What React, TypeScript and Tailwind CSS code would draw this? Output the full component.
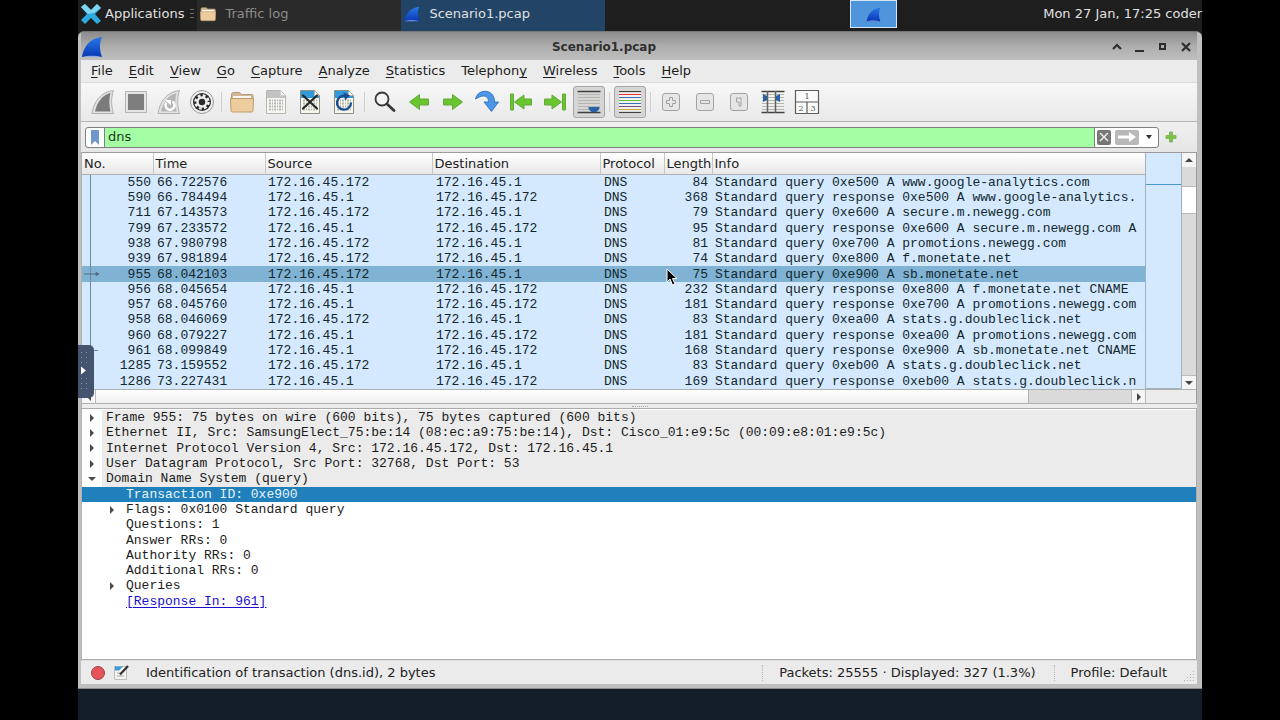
import { useState } from 'react';
import type { ReactNode } from 'react';

type Packet = {
  no: number;
  time: string;
  source: string;
  destination: string;
  length: number;
  info: string;
};

const CLIENT = '172.16.45.172';
const SERVER = '172.16.45.1';

const packets: Packet[] = [
  { no: 550, time: '66.722576', source: CLIENT, destination: SERVER, length: 84, info: 'Standard query 0xe500 A www.google-analytics.com' },
  { no: 590, time: '66.784494', source: SERVER, destination: CLIENT, length: 368, info: 'Standard query response 0xe500 A www.google-analytics.' },
  { no: 711, time: '67.143573', source: CLIENT, destination: SERVER, length: 79, info: 'Standard query 0xe600 A secure.m.newegg.com' },
  { no: 799, time: '67.233572', source: SERVER, destination: CLIENT, length: 95, info: 'Standard query response 0xe600 A secure.m.newegg.com A' },
  { no: 938, time: '67.980798', source: CLIENT, destination: SERVER, length: 81, info: 'Standard query 0xe700 A promotions.newegg.com' },
  { no: 939, time: '67.981894', source: CLIENT, destination: SERVER, length: 74, info: 'Standard query 0xe800 A f.monetate.net' },
  { no: 955, time: '68.042103', source: CLIENT, destination: SERVER, length: 75, info: 'Standard query 0xe900 A sb.monetate.net' },
  { no: 956, time: '68.045654', source: SERVER, destination: CLIENT, length: 232, info: 'Standard query response 0xe800 A f.monetate.net CNAME' },
  { no: 957, time: '68.045760', source: SERVER, destination: CLIENT, length: 181, info: 'Standard query response 0xe700 A promotions.newegg.com' },
  { no: 958, time: '68.046069', source: CLIENT, destination: SERVER, length: 83, info: 'Standard query 0xea00 A stats.g.doubleclick.net' },
  { no: 960, time: '68.079227', source: SERVER, destination: CLIENT, length: 181, info: 'Standard query response 0xea00 A promotions.newegg.com' },
  { no: 961, time: '68.099849', source: SERVER, destination: CLIENT, length: 168, info: 'Standard query response 0xe900 A sb.monetate.net CNAME' },
  { no: 1285, time: '73.159552', source: CLIENT, destination: SERVER, length: 83, info: 'Standard query 0xeb00 A stats.g.doubleclick.net' },
  { no: 1286, time: '73.227431', source: SERVER, destination: CLIENT, length: 169, info: 'Standard query response 0xeb00 A stats.g.doubleclick.n' },
];

const columns = ['No.', 'Time', 'Source', 'Destination', 'Protocol', 'Length', 'Info'];

// [before, underlined letter, after]
const menus = [
  ['', 'F', 'ile'],
  ['', 'E', 'dit'],
  ['', 'V', 'iew'],
  ['', 'G', 'o'],
  ['', 'C', 'apture'],
  ['', 'A', 'nalyze'],
  ['', 'S', 'tatistics'],
  ['Telephon', 'y', ''],
  ['', 'W', 'ireless'],
  ['', 'T', 'ools'],
  ['', 'H', 'elp'],
];

type Detail = { text: string; depth: 0 | 1; state?: 'open' | 'closed'; link?: boolean };

const details: Detail[] = [
  { text: 'Frame 955: 75 bytes on wire (600 bits), 75 bytes captured (600 bits)', depth: 0, state: 'closed' },
  { text: 'Ethernet II, Src: SamsungElect_75:be:14 (08:ec:a9:75:be:14), Dst: Cisco_01:e9:5c (00:09:e8:01:e9:5c)', depth: 0, state: 'closed' },
  { text: 'Internet Protocol Version 4, Src: 172.16.45.172, Dst: 172.16.45.1', depth: 0, state: 'closed' },
  { text: 'User Datagram Protocol, Src Port: 32768, Dst Port: 53', depth: 0, state: 'closed' },
  { text: 'Domain Name System (query)', depth: 0, state: 'open' },
  { text: 'Transaction ID: 0xe900', depth: 1 },
  { text: 'Flags: 0x0100 Standard query', depth: 1, state: 'closed' },
  { text: 'Questions: 1', depth: 1 },
  { text: 'Answer RRs: 0', depth: 1 },
  { text: 'Authority RRs: 0', depth: 1 },
  { text: 'Additional RRs: 0', depth: 1 },
  { text: 'Queries', depth: 1, state: 'closed' },
  { text: '[Response In: 961]', depth: 1, link: true },
];

function Fin({ className }: { className: string }) {
  return (
    <svg viewBox="0 0 24 24" className={className}>
      <defs>
        <linearGradient id="fin" x1="0" y1="0" x2="0" y2="1">
          <stop offset="0" stopColor="#2a78e8" />
          <stop offset="1" stopColor="#0838b4" />
        </linearGradient>
      </defs>
      <path d="M1 23C3 11 10 2 23 1c-3 6-3 14 0 22z" fill="url(#fin)" />
      <path d="M1 23c6-2 15-2 22 0z" fill="#8fa9dc" />
    </svg>
  );
}

function GrayFin({ children, light }: { children?: ReactNode; light?: boolean }) {
  return (
    <svg viewBox="0 0 24 24" className="size-6">
      <path d="M1 23.500C3 11 10 2 22.500.5c-2.500 7-2.500 15 0 23z" fill="#e2e2e2" stroke="#b0b0b0" />
      <path d="M4 21.500C6 12.500 11 5 19.500 3c-1.500 6-1.500 12.500 0 18.500z" fill={light ? '#b5b5b5' : '#7b7b7b'} />
      {children}
    </svg>
  );
}

function Folder({ className }: { className: string }) {
  return (
    <svg viewBox="0 0 24 24" className={className}>
      <path d="M1.500 4.500q0-2 2-2h6l2 2h10q1.500 0 1.500 1.500v6h-21.500z" fill="#d2b795" stroke="#b49a77" />
      <path d="M3 6h18v5H3z" fill="#faf7f2" />
      <path d="M.5 8.500h23l-.5 12q0 1.500-1.500 1.500h-19Q1 22 1 20.500z" fill="#edcd9d" stroke="#bd9c6c" />
    </svg>
  );
}

function Sheet({ gray, children }: { gray?: boolean; children?: ReactNode }) {
  return (
    <svg viewBox="0 0 24 24" className="size-6">
      <path d="M2.500.5h14l5 5v18h-19z" fill="#f7f7ef" stroke={gray ? '#b5b5b5' : '#8f8f83'} />
      <path d="M3 1h13v5h5v2H3z" fill={gray ? '#c2c2c2' : '#2f9ad9'} />
      <path d="M16.500.5v5h5z" fill="#fff" stroke={gray ? '#b5b5b5' : '#8f8f83'} strokeWidth=".6" />
      <path
        d="M5 10.500h14M5 13.500h14M5 16.500h14M5 19.500h14"
        stroke={gray ? '#b5b5b5' : '#b3b8a6'}
        strokeWidth="2"
        strokeDasharray="2 1 1 1"
      />
      {children}
    </svg>
  );
}

function GreenArrow({ back, stop }: { back?: boolean; stop?: boolean }) {
  return (
    <svg viewBox="0 0 24 24" className="size-6">
      <g transform={back ? 'matrix(-1 0 0 1 24 0)' : undefined} fill="#68c52e" stroke="#62a83c">
        {stop ? (
          <>
            <path d="M1.500 9H9V5l9.500 7L9 19v-4H1.500z" />
            <path d="M19.500 4h3v16h-3z" />
          </>
        ) : (
          <path d="M2.500 9h9V4.500l10 7.500-10 7.500V15h-9z" />
        )}
      </g>
    </svg>
  );
}

function ZoomBox({ children }: { children: ReactNode }) {
  return (
    <svg viewBox="0 0 24 24" className="size-6" fill="none" stroke="#a2a2a2">
      <rect x="3.500" y="3.500" width="17" height="17" rx="2.500" fill="#e6e6e6" />
      {children}
    </svg>
  );
}

const captureTools = [
  { label: 'Start capture', icon: <GrayFin /> },
  {
    label: 'Stop capture',
    icon: (
      <svg viewBox="0 0 24 24" className="size-6">
        <rect x="1.500" y="1.500" width="21" height="21" fill="#e4e4e4" stroke="#b5b5b5" />
        <rect x="4" y="4" width="16" height="16" fill="#7d7d7d" />
      </svg>
    ),
  },
  {
    label: 'Restart capture',
    icon: (
      <GrayFin light>
        <path d="M9.500 12.500a4.500 4.500 0 1 0 6-1" fill="none" stroke="#fff" strokeWidth="2.500" />
        <path d="M8 10h6v5.500z" fill="#fff" />
      </GrayFin>
    ),
  },
  {
    label: 'Capture options',
    icon: (
      <svg viewBox="0 0 24 24" className="size-6" fill="none">
        <circle cx="12" cy="12" r="11.500" fill="#eee" stroke="#999" />
        <circle cx="12" cy="12" r="9" fill="#2b2b2b" />
        <circle cx="12" cy="12" r="6.500" stroke="#eee" strokeWidth="2.500" strokeDasharray="2.800 2.300" />
        <circle cx="12" cy="12" r="4.500" stroke="#eee" strokeWidth="2.500" />
      </svg>
    ),
  },
];

const fileTools = [
  { label: 'Open file', icon: <Folder className="size-6" /> },
  { label: 'Save file', icon: <Sheet gray /> },
  {
    label: 'Close file',
    icon: (
      <Sheet>
        <path d="M5 5.500l14 13M19 5.500l-14 13" stroke="#26292b" strokeWidth="2.200" strokeLinecap="round" />
      </Sheet>
    ),
  },
  {
    label: 'Reload file',
    icon: (
      <Sheet>
        <path d="M14 6a7 7 0 1 0 5 6.500" fill="none" stroke="#1d4b93" strokeWidth="2.300" />
        <path d="M11.500 2.500l6.500 3-5 5z" fill="#1d4b93" />
      </Sheet>
    ),
  },
];

const goTools = [
  {
    label: 'Find packet',
    icon: (
      <svg viewBox="0 0 24 24" className="size-6" fill="none" stroke="#383838">
        <circle cx="9" cy="9" r="6.500" fill="#f5f5f5" strokeWidth="1.800" />
        <path d="M14 14l7 6.500" strokeWidth="2.800" strokeLinecap="round" />
      </svg>
    ),
  },
  { label: 'Previous packet', icon: <GreenArrow back /> },
  { label: 'Next packet', icon: <GreenArrow /> },
  {
    label: 'Go to packet',
    icon: (
      <svg viewBox="0 0 24 24" className="size-6">
        <path d="M.5 9C2 3 7 .5 12 1.500c5 1 7.500 5 7.500 10.500h4l-7 9.500-7.500-9.500h4.500c0-4-2-6-5-6-3.500 0-5 1.500-8 3z" fill="#4b96e6" stroke="#3a78c4" />
      </svg>
    ),
  },
  { label: 'First packet', icon: <GreenArrow back stop /> },
  { label: 'Last packet', icon: <GreenArrow stop /> },
];

const viewTools = [
  { label: 'Zoom in', icon: <ZoomBox><path d="M10.500 7.500h3v3h3v3h-3v3h-3v-3h-3v-3h3z" /></ZoomBox> },
  { label: 'Zoom out', icon: <ZoomBox><path d="M7.500 10.500h9v3h-9z" /></ZoomBox> },
  {
    label: 'Normal size',
    icon: <ZoomBox><path d="M9.500 8h4.500v8h-2v-4h-2.500z" /></ZoomBox>,
  },
  {
    label: 'Resize columns',
    icon: (
      <svg viewBox="0 0 24 24" className="size-6">
        <path d="M1 4.500h22M1 7.500h22M1 10.500h22M1 13.500h22M1 16.500h22M1 19.500h22" stroke="#b5b5ae" />
        <path d="M.5 1.500h23M.5 22.500h23" stroke="#3f413d" strokeWidth="1.500" />
        <path d="M6.500 1v22M14.500 1v22" stroke="#60625d" strokeWidth="1.500" />
        <path d="M2 4v8l4-2V6zM19 4v8l-4-2V6z" fill="#2763a5" />
      </svg>
    ),
  },
  {
    label: 'Reset layout',
    icon: (
      <svg viewBox="0 0 26 26" className="size-[26px]">
        <path d="M1.500 1.500h23v23h-23zM1.500 13h23M13 13v11.500" fill="#fafafa" stroke="#5d5d5d" strokeWidth="1.200" />
        <g fill="#555" fontFamily="DejaVu Serif, serif" fontSize="8" textAnchor="middle">
          <text x="13" y="10">1</text>
          <text x="7" y="22">2</text>
          <text x="19" y="22">3</text>
        </g>
      </svg>
    ),
  },
];

function Separator() {
  return <span className="mx-[3px] h-[20px] w-px bg-[#cfcfcf]" />;
}

function ToolGroup({ tools, tight }: { tools: { label: string; icon: ReactNode }[]; tight?: boolean }) {
  return (
    <div className="flex">
      {tools.map((tool) => (
        <button
          key={tool.label}
          aria-label={tool.label}
          className={`flex h-8 items-center justify-center ${tight ? 'w-[33px]' : 'w-[34px]'}`}
        >
          {tool.icon}
        </button>
      ))}
    </div>
  );
}

function Toggle({ label, children }: { label: string; children: ReactNode }) {
  return (
    <button
      aria-label={label}
      aria-pressed="true"
      className="mx-px flex size-8 items-center justify-center rounded-[3px] border border-[#a5a5a5] bg-[#d6d6d6]"
    >
      <svg viewBox="0 0 24 24" className="size-6">
        {children}
      </svg>
    </button>
  );
}

function Taskbar() {
  return (
    <header className="flex h-[31px] items-stretch bg-[#1e1e1e] text-[13px] text-[#e0e0e0]">
      <button className="flex items-center pb-[3px] pl-[2px]">
        <svg viewBox="0 0 22 22" className="size-[22px]">
          <path d="M1 4l4-3 6 6 6-6 4 4-6 6 6 7-4 3-6-6-6 6-4-4 6-6z" fill="#2fa8dc" />
          <path d="M1 4l4-3 6 6 6-6 4 4-7 5-6 1z" fill="#7fd4f2" />
        </svg>
        <span className="ml-[3px]">Applications</span>
        <svg viewBox="0 0 6 12" className="mr-[2px] ml-[5px] h-3 w-[6px]" stroke="#6b6b6b">
          <path d="M1 1.500h4M1 5.500h4M1 9.500h4" />
        </svg>
      </button>
      <button className="flex w-[204px] items-center bg-[#2a2a2a] pb-[3px] text-[#8b8b8b]">
        <Folder className="ml-[3px] size-4" />
        <span className="ml-[9px]">Traffic log</span>
      </button>
      <button className="flex w-[204px] items-center bg-[#224467] pb-[3px]">
        <Fin className="ml-[3px] size-4" />
        <span className="ml-[9px]">Scenario1.pcap</span>
      </button>
      <button
        aria-label="Workspace 1"
        className="mb-[3px] ml-[245px] flex w-[47px] items-center justify-center border border-[#d6e6f5] bg-[#4f95dc]"
      >
        <Fin className="size-[15px]" />
      </button>
      <span className="ml-auto self-center pb-[3px] whitespace-nowrap">Mon 27 Jan, 17:25 coder</span>
    </header>
  );
}

function TitleBar() {
  return (
    <div className="flex h-7 items-center bg-linear-to-b from-[#8b8b8b] via-[#adadad] to-[#bfbfbf] pt-px">
      <Fin className="size-[22px]" />
      <h1 className="flex-1 text-center text-[12px] font-bold text-[#2f2f2f]">Scenario1.pcap</h1>
      <div className="flex text-[#2e2e2e]">
        <button aria-label="Shade" className="flex w-[23px] justify-center">
          <svg viewBox="0 0 12 12" className="size-3" fill="none" stroke="currentColor" strokeWidth="2.200"><path d="M2 8l4-4 4 4" /></svg>
        </button>
        <button aria-label="Minimize" className="flex w-[23px] justify-center">
          <svg viewBox="0 0 12 12" className="size-3" stroke="currentColor" strokeWidth="2"><path d="M1 10h9" /></svg>
        </button>
        <button aria-label="Maximize" className="flex w-[23px] justify-center">
          <svg viewBox="0 0 12 12" className="size-3" fill="none" stroke="currentColor" strokeWidth="2"><path d="M3 3h5v5H3z" /></svg>
        </button>
        <button aria-label="Close" className="flex w-[23px] justify-center">
          <svg viewBox="0 0 12 12" className="size-3" stroke="currentColor" strokeWidth="2.200"><path d="M2 2l8 8M10 2l-8 8" /></svg>
        </button>
      </div>
    </div>
  );
}

function Toolbar() {
  return (
    <div className="flex h-10 items-center border-y border-t-[#dadada] border-b-[#b4b4b4] bg-linear-to-b from-[#f7f7f7] to-[#e9e9e9] pl-[5px]">
      <ToolGroup tools={captureTools} tight />
      <Separator />
      <ToolGroup tools={fileTools} />
      <Separator />
      <ToolGroup tools={goTools} />
      <Toggle label="Auto scroll">
        <path d="M1 4.500h22M1 7.500h22M1 10.500h22M1 13.500h22M1 16.500h22M1 19.500h11" stroke="#b4b6ae" />
        <path d="M.5 1.500h23M.5 22.500h23" stroke="#3f413d" strokeWidth="1.500" />
        <path d="M11.500 17h11v2l-3 3h-5l-3-3z" fill="#2763a5" />
      </Toggle>
      <Separator />
      <Toggle label="Colorize packets">
        <path d="M1 3h22v18H1z" fill="#f1f1f1" />
        <path d="M1 1.500h22M1 22.500h22" stroke="#3f413d" />
        <path d="M1 4.500h22" stroke="#e03030" />
        <path d="M1 7.500h22" stroke="#3c6fb5" />
        <path d="M1 10.500h22" stroke="#63c02c" />
        <path d="M1 13.500h22" stroke="#3c6fb5" />
        <path d="M1 16.500h22" stroke="#76507b" />
        <path d="M1 19.500h22" stroke="#c9a227" />
      </Toggle>
      <Separator />
      <ToolGroup tools={viewTools} />
    </div>
  );
}

function FilterBar() {
  const [filter, setFilter] = useState('dns');

  return (
    <div className="flex h-[30px] items-center bg-linear-to-b from-[#f0f0f0] to-[#e6e6e6] pl-[4px]">
      <div className="flex h-[21px] flex-1 overflow-hidden rounded-[3px] border border-[#808080] bg-white">
        <button aria-label="Bookmark filter" className="flex w-[18px] items-center justify-center">
          <svg viewBox="0 0 8 15" className="h-[15px] w-2"><path d="M0 0h8v15l-4-4-4 4z" fill="#6f97cc" /></svg>
        </button>
        <input
          aria-label="Display filter"
          value={filter}
          onChange={(e) => setFilter(e.target.value)}
          className="min-w-0 flex-1 border-x border-[#808080] bg-[#a4ffa4] pl-[3px] text-[13px] text-[#1c3a1c] outline-none"
        />
        <button aria-label="Clear filter" onClick={() => setFilter('')} className="my-[2px] ml-[2px] flex w-[14px] items-center justify-center rounded-[2px] bg-[#777]">
          <svg viewBox="0 0 10 10" className="size-[10px]" stroke="#eee" strokeWidth="1.500"><path d="M1 1l8 8M9 1L1 9" /></svg>
        </button>
        <button aria-label="Apply filter" className="my-[2px] ml-[4px] flex w-6 items-center justify-center rounded-[2px] bg-[#b8b8b8]">
          <svg viewBox="0 0 18 10" className="h-[10px] w-[18px]" fill="#fff"><path d="M0 3.500h11V0l7 5-7 5V6.500H0z" /></svg>
        </button>
        <button aria-label="Recent filters" className="flex w-[19px] items-center justify-center">
          <svg viewBox="0 0 6 4" className="h-1 w-[6px]"><path d="M0 0h6L3 4z" fill="#333" /></svg>
        </button>
      </div>
      <button aria-label="Add filter button" className="mr-[20px] ml-[6px]">
        <svg viewBox="0 0 12 12" className="size-3"><path d="M4.500 1h3v3.500H11v3H7.500V11h-3V7.500H1v-3h3.500z" fill="#7cc243" stroke="#7fb55f" /></svg>
      </button>
    </div>
  );
}

function Marker({ no }: { no: number }) {
  if (no > 961) return null;
  return (
    <span className="absolute inset-y-0 left-0 w-[18px]">
      <span className={`absolute top-0 left-[8px] w-px bg-[#6d8aa0] ${no === 961 ? 'h-[8px]' : 'h-full'}`} />
      {no === 961 && <span className="absolute top-[7px] left-[8px] h-px w-[8px] bg-[#6d8aa0]" />}
      {no === 955 && (
        <svg viewBox="0 0 16 8" className="absolute top-[4px] left-[2px] h-2 w-4" stroke="#4f6b80" fill="#4f6b80">
          <path d="M0 4h14M12 2.500L15 4l-3 1.500z" strokeWidth="1" />
        </svg>
      )}
    </span>
  );
}

function PacketList() {
  const [selected, setSelected] = useState(955);

  return (
    <section className="relative border-t border-r border-[#9c9c9c] bg-[#ececec]">
      <div className="flex">
        <div className="min-w-0 flex-1 overflow-hidden">
          <table className="h-[236px] w-full table-fixed border-collapse bg-[#d4e9fd]">
            <colgroup>
              <col className="w-[71px]" />
              <col className="w-[112px]" />
              <col className="w-[167px]" />
              <col className="w-[168px]" />
              <col className="w-[64px]" />
              <col className="w-[48px]" />
              <col />
            </colgroup>
            <thead>
              <tr className="h-[21px] bg-linear-to-b from-white to-[#e8e8e8] text-left text-[13px] text-[#222]">
                {columns.map((name) => (
                  <th key={name} scope="col" className="border-r border-b border-r-[#c6c6c6] border-b-[#b0b0b0] p-0 pt-[2px] pl-[2px] leading-[18px] font-normal whitespace-nowrap last:border-r-0">
                    {name}
                  </th>
                ))}
              </tr>
            </thead>
            <tbody className="font-['Liberation_Mono',monospace] text-[13px] leading-[15px] text-[#12272e]">
              {packets.map((packet) => (
                <tr
                  key={packet.no}
                  onClick={() => setSelected(packet.no)}
                  className={packet.no === selected ? 'bg-[#80b2d3]' : ''}
                >
                  <td className="relative p-0 pr-[2px] text-right">
                    <Marker no={packet.no} />
                    {packet.no}
                  </td>
                  <td className="p-0 pl-[4px]">{packet.time}</td>
                  <td className="p-0 pl-[3px]">{packet.source}</td>
                  <td className="p-0 pl-[4px]">{packet.destination}</td>
                  <td className="p-0 pl-[4px]">DNS</td>
                  <td className="p-0 pr-[4px] text-right">{packet.length}</td>
                  <td className="overflow-hidden p-0 pl-[3px] whitespace-nowrap">{packet.info}</td>
                </tr>
              ))}
            </tbody>
          </table>
        </div>
        <div className="w-[37px] border-x border-b border-[#9fb0bf] bg-[#d4e9fd] pt-[31px]">
          <div className="h-px bg-[#4a9ad0]" />
        </div>
        <div className="flex w-[14px] flex-col bg-[#dadada]">
          <span className="flex h-[14px] items-center justify-center bg-[#f5f5f5]">
            <svg viewBox="0 0 8 4" className="h-1 w-2"><path d="M0 4h8L4 0z" fill="#444" /></svg>
          </span>
          <span className="mt-[19px] h-[28px] border-y border-[#bbb] bg-white" />
          <span className="mt-auto flex h-[14px] items-center justify-center border-t border-[#bbb] bg-[#f5f5f5]">
            <svg viewBox="0 0 8 4" className="h-1 w-2"><path d="M0 0h8L4 4z" fill="#444" /></svg>
          </span>
        </div>
      </div>
      <div className="flex h-[15px] border-y border-[#b0b0b0] bg-[#dadada]">
        <span className="flex w-[14px] items-center justify-center border-r border-[#bbb] bg-[#f5f5f5]">
          <svg viewBox="0 0 4 8" className="h-2 w-1"><path d="M4 0v8L0 4z" fill="#444" /></svg>
        </span>
        <span className="flex-1 border-r border-[#b0b0b0] bg-linear-to-b from-white to-[#f0f0f0]" />
        <span className="w-[102px]" />
        <span className="flex w-[15px] items-center justify-center border-x border-[#bbb] bg-[#f5f5f5]">
          <svg viewBox="0 0 4 8" className="h-2 w-1"><path d="M0 0v8l4-4z" fill="#444" /></svg>
        </span>
        <span className="w-[50px] bg-[#ececec]" />
      </div>
      {/* mouse pointer */}
      <svg viewBox="0 0 12 18" className="absolute top-[115px] left-[584px] h-[18px] w-3">
        <path d="M1 1v13l3-3 2.500 6 2.500-1-2.500-5.500H11z" fill="#000" stroke="#fff" />
      </svg>
    </section>
  );
}

function DetailRow({ detail, selected, onSelect }: { detail: Detail; selected: boolean; onSelect: () => void }) {
  const background = selected ? 'bg-[#2080bc] text-[#e8f4fb]' : '';
  return (
    <li onClick={onSelect} className={`flex flex-1 items-stretch whitespace-nowrap ${background}`}>
      {detail.depth === 1 && <span className="w-5" />}
      <span className="flex w-5 items-center justify-center">
        {detail.state && (
          <button aria-label={detail.state === 'open' ? 'Collapse' : 'Expand'}>
            <svg viewBox="0 0 8 8" className="size-2" fill="#4a4a4a">
              <path d={detail.state === 'open' ? 'M0 2h8L4 6z' : 'M2 0l4 4-4 4z'} />
            </svg>
          </button>
        )}
      </span>
      <span className={`flex-1 pl-1 ${detail.depth === 0 ? 'bg-[#ebebeb]' : ''}`}>
        {detail.link ? (
          <a href="#961" className="text-[#1a0fd0] underline underline-offset-2">{detail.text}</a>
        ) : (
          detail.text
        )}
      </span>
    </li>
  );
}

function PacketDetails() {
  const [selected, setSelected] = useState(5);

  return (
    <section className="flex-1 border-y border-r border-[#ababab] bg-white">
      <ul className="flex h-[200px] flex-col overflow-hidden pt-px font-['Liberation_Mono',monospace] text-[13px] leading-[15px] text-[#1c1c1c]">
        {details.map((detail, index) => (
          <DetailRow key={detail.text} detail={detail} selected={index === selected} onSelect={() => setSelected(index)} />
        ))}
      </ul>
    </section>
  );
}

function StatusBar() {
  return (
    <footer className="flex h-[23px] items-center bg-[#ebebeb] pl-[10px] text-[13px] whitespace-nowrap text-[#222]">
      <button aria-label="Expert information">
        <svg viewBox="0 0 14 14" className="size-[14px]"><circle cx="7" cy="7" r="6.500" fill="#e5545a" stroke="#a04045" /></svg>
      </button>
      <button aria-label="Capture comments" className="ml-[9px]">
        <svg viewBox="0 0 15 15" className="size-[15px]">
          <path d="M.5 1.500h12v13H.5z" fill="#f4f4f0" stroke="#bcbcbc" />
          <path d="M1 1.500h8l-4 4H1z" fill="#3a9bd5" />
          <path d="M3 8h3M3 11h7" stroke="#aaa" />
          <path d="M14 1L6 9.500" stroke="#333" strokeWidth="2.200" />
        </svg>
      </button>
      <span className="ml-[17px] flex-1">Identification of transaction (dns.id), 2 bytes</span>
      <span className="h-4 border-l border-dotted border-[#b5b5b5]" />
      <span className="ml-[16px]">Packets: 25555 · Displayed: 327 (1.3%)</span>
      <span className="mr-[16px] ml-[18px] h-4 border-l border-dotted border-[#b5b5b5]" />
      <button>Profile: Default</button>
      <svg viewBox="0 0 12 12" className="mt-2 mr-px ml-[17px] size-3" fill="#b0b0b0">
        <path d="M9 0h1v1H9zM6 3h1v1H6zM9 3h1v1H9zM3 6h1v1H3zM6 6h1v1H6zM9 6h1v1H9zM0 9h1v1H0zM3 9h1v1H3zM6 9h1v1H6zM9 9h1v1H9z" />
      </svg>
    </footer>
  );
}

export default function App() {
  return (
    <div className="min-h-screen bg-black px-[78px] font-['DejaVu_Sans',sans-serif]">
      <div className="relative flex min-h-screen flex-col bg-[#141e29] pb-[31px]">
        <Taskbar />
        <main className="flex flex-1 flex-col overflow-hidden rounded-t-[6px] border-t border-b border-t-[#777] border-b-[#8d8d8d] bg-[#bfbfbf] pr-[5px] pb-[4px] pl-[3px]">
          <TitleBar />
          <nav className="flex h-[22px] items-center bg-[#ebebeb] pl-[2px] text-[13px] text-[#1d1d1d]">
            {menus.map(([before, key, after]) => (
              <button key={before + key + after} className="px-2">
                {before}
                <span className="underline underline-offset-2">{key}</span>
                {after}
              </button>
            ))}
          </nav>
          <Toolbar />
          <FilterBar />
          <div className="flex flex-1 flex-col border-b border-l border-b-[#dedede] border-l-[#b0b0b0] bg-[#ececec]">
            <PacketList />
            <div className="flex h-[4px] items-center justify-center">
              <span className="w-4 border-t border-dotted border-[#aaa]" />
            </div>
            <PacketDetails />
          </div>
          <StatusBar />
        </main>
        {/* remote desktop side handle */}
        <button
          aria-label="Open control bar"
          className="absolute top-[345px] left-0 flex h-[53px] w-[16px] items-center rounded-r-[5px] bg-[#44536e]"
        >
          <svg viewBox="0 0 16 53" className="h-[53px] w-4">
            <path d="M3.500 7v14M8.500 7v14M3.500 33v14M8.500 33v14" stroke="#8592ab" strokeDasharray="1 4" />
            <path d="M3 21.500l5 4-5 4z" fill="#fff" />
          </svg>
        </button>
      </div>
    </div>
  );
}
